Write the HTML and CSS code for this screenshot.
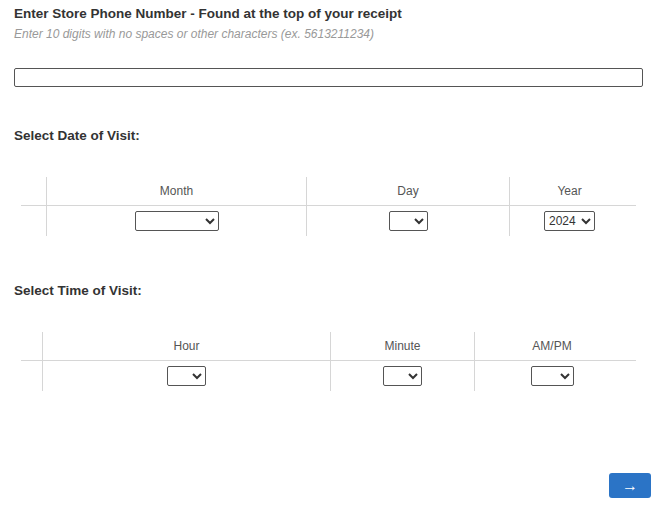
FILE: index.html
```html
<!DOCTYPE html>
<html lang="en">
<head>
  <meta charset="UTF-8">
  <title>Store Visit</title>
  <link rel="stylesheet" href="styles.css">
</head>
<body>
  <div class="survey">
    <h2 class="question">Enter Store Phone Number - Found at the top of your receipt</h2>
    <p class="hint">Enter 10 digits with no spaces or other characters (ex. 5613211234)</p>
    <input type="text" class="phone-input">

    <h3 class="label">Select Date of Visit:</h3>
    <div class="pick-table date-table">
      <div class="cell head first"></div>
      <div class="cell head">Month</div>
      <div class="cell head">Day</div>
      <div class="cell head last">Year</div>
      <div class="cell first"></div>
      <div class="cell"><select class="month-select"><option></option></select></div>
      <div class="cell"><select class="small-select"><option></option></select></div>
      <div class="cell last"><select class="year-select"><option>2024</option></select></div>
    </div>

    <h3 class="label time-label">Select Time of Visit:</h3>
    <div class="pick-table time-table">
      <div class="cell head first"></div>
      <div class="cell head">Hour</div>
      <div class="cell head">Minute</div>
      <div class="cell head last">AM/PM</div>
      <div class="cell first"></div>
      <div class="cell"><select class="small-select"><option></option></select></div>
      <div class="cell"><select class="small-select"><option></option></select></div>
      <div class="cell last"><select class="ampm-select"><option></option></select></div>
    </div>

    <div class="footer">
      <button class="next-btn">&rarr;</button>
    </div>
  </div>
</body>
</html>
```

FILE: styles.css
```css
body {
  margin: 0;
  font-family: "Liberation Sans", Arial, sans-serif;
  background: #fff;
  color: #333;
}

.survey {
  padding: 6px 19px 0 14px;
}

.question {
  font-size: 13.5px;
  line-height: 16px;
  font-weight: bold;
  margin: 0;
  color: #333;
}

.hint {
  font-size: 12px;
  line-height: 14px;
  font-style: italic;
  color: #999;
  margin: 5px 0 0;
}

.phone-input {
  display: block;
  box-sizing: border-box;
  width: 100%;
  height: 19px;
  margin-top: 27px;
  border: 1px solid #555;
  border-radius: 2px;
  padding: 0 4px;
}

.label {
  font-size: 13.5px;
  line-height: 16px;
  font-weight: bold;
  margin: 41px 0 0;
  color: #333;
}

.time-label {
  margin-top: 47px;
}

.pick-table {
  display: grid;
  margin: 33px 7px 0 7px;
}

.date-table {
  grid-template-columns: 25px 260px 203px 1fr;
}

.time-table {
  grid-template-columns: 21px 288px 144px 1fr;
}

.cell {
  border-left: 1px solid #d6d6d6;
  height: 30px;
  display: flex;
  align-items: center;
  justify-content: center;
  font-size: 12px;
  color: #555;
}

.cell.head {
  height: 28px;
  border-bottom: 1px solid #d6d6d6;
}

.cell.first {
  border-left: none;
}

.cell.last {
  padding-right: 7px;
}

select {
  box-sizing: border-box;
  height: 20px;
  font-family: "Liberation Sans", Arial, sans-serif;
  font-size: 12px;
  color: #333;
  background: #fff;
  border: 1px solid #555;
  border-radius: 2px;
  padding: 0;
}

.month-select { width: 84px; }
.small-select { width: 39px; }
.year-select { width: 51px; }
.ampm-select { width: 43px; }

.footer {
  display: flex;
  justify-content: flex-end;
  margin: 82px -8px 0 0;
}

.next-btn {
  width: 42px;
  height: 25px;
  border: none;
  border-radius: 3px;
  background: #2b74c6;
  color: #fff;
  font-size: 16px;
  line-height: 25px;
  padding: 0;
}
```
